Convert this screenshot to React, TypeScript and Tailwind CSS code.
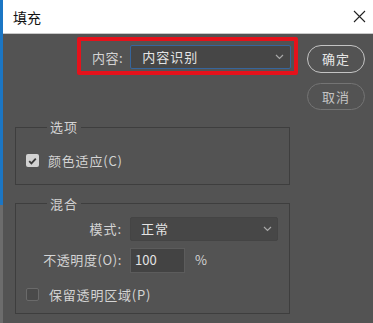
import React from 'react';

const font = { fontFamily: '"Noto Sans CJK SC", "Noto Sans", sans-serif' };

const Chevron: React.FC = () => (
  <svg width="9" height="6" viewBox="0 0 9 6" fill="none">
    <path d="M1 1l3.5 3.5L8 1" stroke="#a8a8a8" strokeWidth="1.2" />
  </svg>
);

const CheckBox: React.FC<{ checked?: boolean }> = ({ checked }) =>
  checked ? (
    <span className="flex h-[13px] w-[13px] items-center justify-center rounded-[2px] bg-[#d2d2d2]">
      <svg width="9" height="8" viewBox="0 0 9 8" fill="none">
        <path d="M1.2 4.2l2.2 2.2L7.8 1.6" stroke="#3a3a3a" strokeWidth="1.8" />
      </svg>
    </span>
  ) : (
    <span className="h-[13px] w-[13px] rounded-[2px] border border-[#6a6a6a] bg-[#4a4a4a]" />
  );

export default function App() {
  return (
    <div className="flex h-[323px] w-[373px] overflow-hidden bg-[#535353]" style={font}>
      {/* desktop showing behind the dialog edge */}
      <div className="flex w-[3px] flex-col">
        <div className="h-[205px] bg-[#1b76c4]" />
        <div className="flex-1 bg-[#6c6c6c]" />
      </div>

      <div className="flex flex-1 flex-col">
        <div className="flex h-[34px] items-center justify-between border-b border-[#c9c9c9] bg-white pl-[10px] pr-[7px]">
          <span className="text-[14px] leading-none text-[#111]">填充</span>
          <svg width="13" height="13" viewBox="0 0 13 13" fill="none">
            <path d="M1 1l11 11M12 1L1 12" stroke="#222" strokeWidth="1.1" />
          </svg>
        </div>

        <div className="flex text-[13px] text-[#d4d4d4]">
          <div className="ml-[12px] flex w-[275px] flex-col">
            <div className="ml-[62px] mt-[3px] flex h-[38px] w-[221px] rounded-[2px] border-[4px] border-[#e5121b] pl-[11px] pt-[4px]">
              <span className="mr-[7px] mt-[3px] tracking-[0.5px]">内容:</span>
              <div className="flex h-[24px] w-[161px] items-center justify-between rounded-[2px] border-[1.5px] border-[#36659c] bg-[#464646] pl-[11px] pr-[6px]">
                <span className="tracking-[1px] text-[#e4e4e4]">内容识别</span>
                <Chevron />
              </div>
            </div>

            <fieldset className="mt-[45px] border border-[#3e3e3e] px-[10px] pb-[13px] pt-[17px]">
              <legend className="ml-[21px] px-[3px] leading-[14px] tracking-[1px]">选项</legend>
              <div className="flex items-center gap-[9px]">
                <CheckBox checked />
                <span className="tracking-[0.8px]">颜色适应(C)</span>
              </div>
            </fieldset>

            <fieldset className="mt-[12px] border border-[#3e3e3e] px-[10px] pb-[9px] pt-[6px]">
              <legend className="ml-[21px] px-[3px] leading-[14px] tracking-[1px]">混合</legend>
              <div className="flex items-center gap-[8px]">
                <span className="w-[96px] text-right tracking-[1px]">模式:</span>
                <div className="flex h-[24px] w-[148px] items-center justify-between rounded-[2px] border border-[#444] bg-[#474747] pl-[10px] pr-[5px]">
                  <span className="tracking-[1px] text-[#e4e4e4]">正常</span>
                  <Chevron />
                </div>
              </div>
              <div className="mt-[7px] flex items-center gap-[8px]">
                <span className="w-[96px] text-right tracking-[0.6px]">不透明度(O):</span>
                <div className="flex h-[25px] w-[55px] items-center border border-[#5c5c5c] bg-[#434343] pl-[4px] text-[#e4e4e4]">
                  100
                </div>
                <span className="ml-[2px]">%</span>
              </div>
              <div className="mt-[12px] flex items-center gap-[10px]">
                <CheckBox />
                <span className="tracking-[0.8px]">保留透明区域(P)</span>
              </div>
            </fieldset>
          </div>

          <div className="ml-[17px] mt-[11px] flex flex-col gap-[10px]">
            <button className="flex h-[28px] w-[58px] items-center justify-center rounded-full border-[1.5px] border-[#c4c4c4] text-[#e6e6e6] tracking-[1px]">
              确定
            </button>
            <button className="flex h-[27px] w-[58px] items-center justify-center rounded-full border border-[#747474] text-[#c4c4c4] tracking-[1px]">
              取消
            </button>
          </div>
        </div>
      </div>
    </div>
  );
}
